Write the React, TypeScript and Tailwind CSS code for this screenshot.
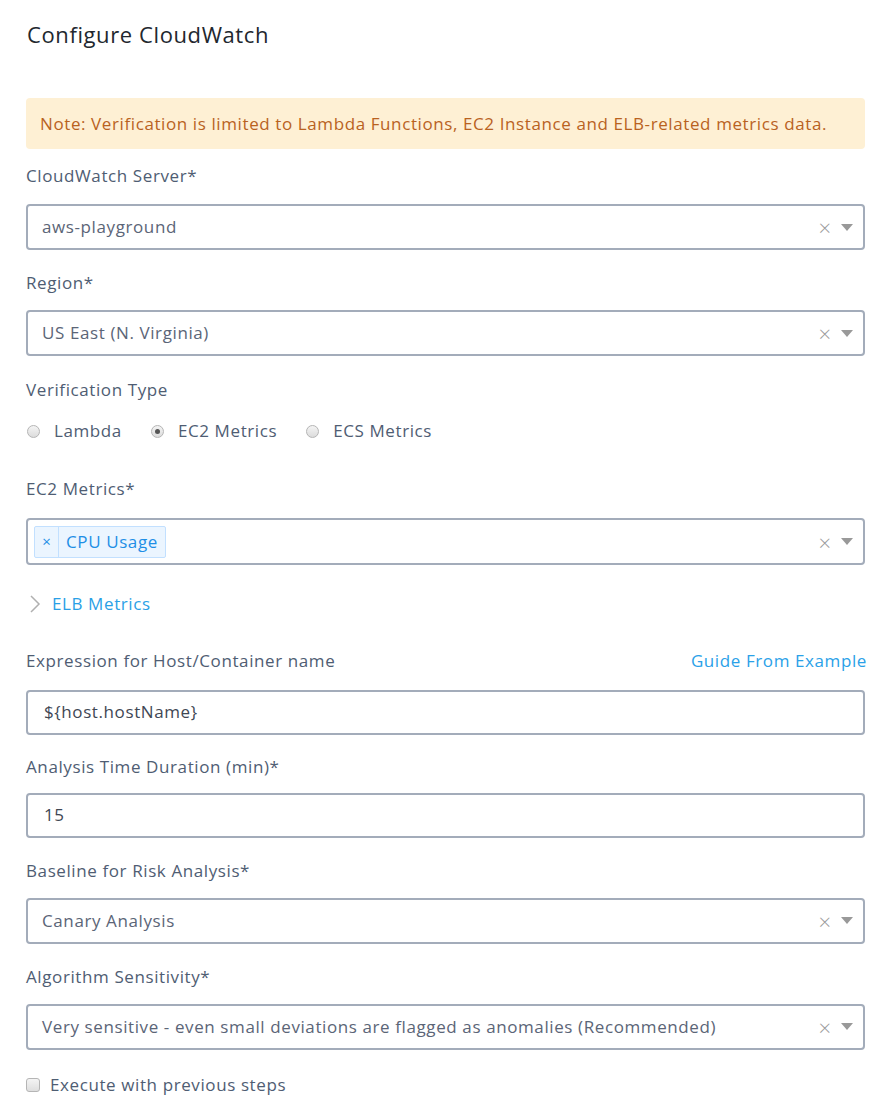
import React from "react";

const font = { fontFamily: "'Open Sans', 'Noto Sans', sans-serif" };

function Caret() {
  return (
    <div className="flex items-center gap-[10px] text-[#9a9a9a] tracking-normal">
      <span className="text-[22px] leading-none font-light">×</span>
      <svg width="12" height="7" viewBox="0 0 12 7"><path d="M0 0 L12 0 L6 7 Z" fill="#999" /></svg>
    </div>
  );
}

function Select({ value }: { value: string }) {
  return (
    <div className="h-[46px] border-2 border-[#a3acba] rounded-[4px] flex items-center justify-between pl-[14px] pr-[10px]">
      <span className="text-[17px] text-[#5b6577]">{value}</span>
      <Caret />
    </div>
  );
}

function Input({ value }: { value: string }) {
  return (
    <div className="h-[45px] border-2 border-[#a3acba] rounded-[4px] flex items-center pl-[16px]">
      <span className="text-[17px] text-[#3f4754]">{value}</span>
    </div>
  );
}

function Label({ children }: { children: React.ReactNode }) {
  return <div className="text-[17px] leading-[24px] text-[#4f5d73]">{children}</div>;
}

function Radio({ checked, label }: { checked?: boolean; label: string }) {
  return (
    <div className="flex items-center">
      <span className="w-[13px] h-[13px] rounded-full border border-[#b5b5b5] bg-gradient-to-b from-[#f4f4f4] to-[#dcdcdc] flex items-center justify-center">
        {checked && <span className="w-[5px] h-[5px] rounded-full bg-[#555]" />}
      </span>
      <span className="ml-[14px] text-[17px] text-[#4f5d73]">{label}</span>
    </div>
  );
}

export default function App() {
  return (
    <div className="bg-white w-[884px] h-[1120px] pl-[26px] pr-[19px] tracking-[0.6px]" style={font}>
      <div className="pt-[19px] pl-[1px] text-[22px] leading-[30px] text-[#22272e]">Configure CloudWatch</div>

      <div className="mt-[49px] h-[51px] rounded-[4px] bg-[#fef0d4] flex items-center pl-[14px] text-[17px] text-[#b9621f]">
        Note: Verification is limited to Lambda Functions, EC2 Instance and ELB-related metrics data.
      </div>

      <div className="mt-[15px]"><Label>CloudWatch Server*</Label></div>
      <div className="mt-[16px]"><Select value="aws-playground" /></div>

      <div className="mt-[21px]"><Label>Region*</Label></div>
      <div className="mt-[15px]"><Select value="US East (N. Virginia)" /></div>

      <div className="mt-[22px]"><Label>Verification Type</Label></div>
      <div className="mt-[17px] h-[24px] flex items-center gap-[29px] pl-[1px]">
        <Radio label="Lambda" />
        <Radio checked label="EC2 Metrics" />
        <Radio label="ECS Metrics" />
      </div>

      <div className="mt-[34px]"><Label>EC2 Metrics*</Label></div>
      <div className="mt-[17px] h-[47px] border-2 border-[#a3acba] rounded-[4px] flex items-center justify-between pl-[6px] pr-[10px]">
        <div className="flex h-[32px] border border-[#c2e0ff] bg-[#ebf5ff] rounded-[2px] text-[#1e8fe6]">
          <span className="w-[24px] flex items-center justify-center border-r border-[#c2e0ff] text-[15px] tracking-normal">×</span>
          <span className="px-[7px] flex items-center text-[17px]">CPU Usage</span>
        </div>
        <Caret />
      </div>

      <div className="mt-[27px] h-[24px] flex items-center">
        <svg width="14" height="18" viewBox="0 0 14 18" className="ml-[2px]"><path d="M3 1 L11 9 L3 17" fill="none" stroke="#b0b0b0" strokeWidth="1.5" /></svg>
        <span className="ml-[10px] text-[17px] text-[#2a9fe6]">ELB Metrics</span>
      </div>

      <div className="mt-[32px] flex justify-between items-center">
        <Label>Expression for Host/Container name</Label>
        <span className="text-[17px] text-[#2aa1e8] -mr-[2px]">Guide From Example</span>
      </div>
      <div className="mt-[16px]"><Input value="${host.hostName}" /></div>

      <div className="mt-[20px]"><Label>Analysis Time Duration (min)*</Label></div>
      <div className="mt-[14px]"><Input value="15" /></div>

      <div className="mt-[21px]"><Label>Baseline for Risk Analysis*</Label></div>
      <div className="mt-[15px]"><Select value="Canary Analysis" /></div>

      <div className="mt-[21px]"><Label>Algorithm Sensitivity*</Label></div>
      <div className="mt-[15px]"><Select value="Very sensitive - even small deviations are flagged as anomalies (Recommended)" /></div>

      <div className="mt-[23px] h-[24px] flex items-center">
        <span className="w-[14px] h-[14px] rounded-[3px] border border-[#b5b5b5] bg-gradient-to-b from-[#f4f4f4] to-[#dedede]" />
        <span className="ml-[10px] text-[17px] text-[#4f5d73]">Execute with previous steps</span>
      </div>
    </div>
  );
}
